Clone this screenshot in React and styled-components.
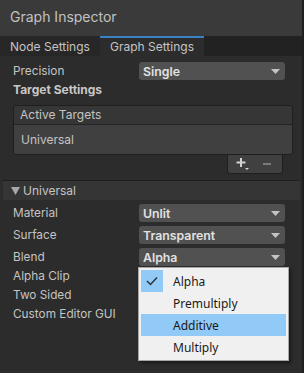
import React from "react";
import styled, { createGlobalStyle } from "styled-components";

const GlobalStyle = createGlobalStyle`
  html, body {
    margin: 0;
    padding: 0;
    background: #1f1f1f;
  }
  body {
    font-family: Inter, "Noto Sans", sans-serif;
    font-size: 12px;
    color: #c4c4c4;
  }
`;

const blendOptions = ["Alpha", "Premultiply", "Additive", "Multiply"];

const Arrow = () => (
  <svg width="9" height="5" viewBox="0 0 9 5">
    <path d="M0 0 H9 L4.5 5 Z" fill="#c4c4c4" />
  </svg>
);

const Dropdown = ({ value }) => (
  <Select>
    <span>{value}</span>
    <Arrow />
  </Select>
);

const App = () => {
  return (
    <Window>
      <GlobalStyle />
      <TitleBar>Graph Inspector</TitleBar>
      <TabStrip>
        <Tab>Node Settings</Tab>
        <Tab active>Graph Settings</Tab>
      </TabStrip>
      <Content>
        <FieldRow>
          <Label>Precision</Label>
          <Dropdown value="Single" />
        </FieldRow>
        <SectionTitle>Target Settings</SectionTitle>
        <ListBox>
          <ListHeader>Active Targets</ListHeader>
          <ListBody>Universal</ListBody>
        </ListBox>
        <ListFooter>
          <FooterButton>
            <svg width="14" height="14" viewBox="0 0 14 14">
              <path d="M5 1 V10 M0.5 5.5 H9.5" stroke="#d2d2d2" strokeWidth="2" />
              <path d="M9 11 H13 L11 13 Z" fill="#d2d2d2" />
            </svg>
          </FooterButton>
          <FooterButton>
            <svg width="10" height="4" viewBox="0 0 10 4">
              <path d="M1 2 H9" stroke="#7a7a7a" strokeWidth="2" />
            </svg>
          </FooterButton>
        </ListFooter>
      </Content>
      <Foldout>
        <svg width="9" height="8" viewBox="0 0 9 8">
          <path d="M0 0 H9 L4.5 8 Z" fill="#a8a8a8" />
        </svg>
        <span>Universal</span>
      </Foldout>
      <Fields>
        <FieldRow spaced>
          <Label>Material</Label>
          <Dropdown value="Unlit" />
        </FieldRow>
        <FieldRow spaced>
          <Label>Surface</Label>
          <Dropdown value="Transparent" />
        </FieldRow>
        <FieldRow>
          <Label>Blend</Label>
          <Dropdown value="Alpha" />
          <Menu>
            {blendOptions.map((opt) => (
              <MenuItem key={opt} hovered={opt === "Additive"}>
                <CheckCell checked={opt === "Alpha"}>
                  {opt === "Alpha" && (
                    <svg width="12" height="10" viewBox="0 0 12 10">
                      <path d="M1 5 L4.5 8.5 L11 1.5" stroke="#333" strokeWidth="1.5" fill="none" />
                    </svg>
                  )}
                </CheckCell>
                <span>{opt}</span>
              </MenuItem>
            ))}
          </Menu>
        </FieldRow>
        <FieldRow toggle>
          <Label>Alpha Clip</Label>
        </FieldRow>
        <FieldRow toggle>
          <Label>Two Sided</Label>
        </FieldRow>
        <FieldRow toggle>
          <Label>Custom Editor GUI</Label>
        </FieldRow>
      </Fields>
    </Window>
  );
};

export default App;

const Window = styled.div`
  width: 302px;
  height: 373px;
  background: #2c2c2c;
  display: flex;
  flex-direction: column;
  overflow: hidden;
`;

const TitleBar = styled.div`
  height: 36px;
  background: #3a3a3a;
  color: #c2c2c2;
  font-size: 14px;
  line-height: 34px;
  padding-left: 10px;
  flex-shrink: 0;
`;

const TabStrip = styled.div`
  height: 20px;
  background: #222222;
  display: flex;
  flex-shrink: 0;
`;

const Tab = styled.div`
  width: ${(p) => (p.active ? "104px" : "100px")};
  box-sizing: border-box;
  background: ${(p) => (p.active ? "#2c2c2c" : "#272727")};
  border-top: 2px solid ${(p) => (p.active ? "#3c7fc4" : "transparent")};
  padding-left: 10px;
  line-height: 17px;
  color: #c4c4c4;
  font-size: 12px;
`;

const Content = styled.div`
  padding: 6px 9px 0 13px;
  display: flex;
  flex-direction: column;
`;

const FieldRow = styled.div`
  position: relative;
  display: flex;
  align-items: center;
  height: ${(p) => (p.toggle ? "19px" : "18px")};
  margin-bottom: ${(p) => (p.spaced ? "4px" : "0")};
  padding-right: ${(p) => (p.toggle ? "0" : "8px")};
`;

const Label = styled.div`
  width: 126px;
  flex-shrink: 0;
  color: #c4c4c4;
  font-size: 11.8px;
`;

const Select = styled.div`
  flex: 1;
  height: 18px;
  box-sizing: border-box;
  background: #515151;
  border-radius: 3px;
  display: flex;
  align-items: center;
  justify-content: space-between;
  padding: 0 5px 0 4px;
  color: #e2e2e2;
  font-weight: 600;
  font-size: 12.3px;
`;

const SectionTitle = styled.div`
  height: 20px;
  line-height: 20px;
  font-weight: 700;
  font-size: 12px;
  color: #c8c8c8;
`;

const ListBox = styled.div`
  margin-top: 5px;
  border: 1px solid #1f1f1f;
  border-radius: 3px;
  overflow: hidden;
`;

const ListHeader = styled.div`
  height: 18px;
  line-height: 18px;
  background: #363636;
  border-bottom: 1px solid #232323;
  padding-left: 6px;
  color: #c4c4c4;
  font-size: 12px;
`;

const ListBody = styled.div`
  height: 29px;
  line-height: 29px;
  background: #404040;
  padding-left: 7px;
  color: #c4c4c4;
  font-size: 12px;
`;

const ListFooter = styled.div`
  align-self: flex-end;
  margin-right: 10px;
  width: 56px;
  height: 19px;
  box-sizing: border-box;
  background: #404040;
  border: 1px solid #1f1f1f;
  border-top: none;
  border-radius: 0 0 3px 3px;
  display: flex;
  align-items: center;
  justify-content: center;
  gap: 8px;
`;

const FooterButton = styled.div`
  width: 16px;
  height: 16px;
  display: flex;
  align-items: center;
  justify-content: center;
`;

const Foldout = styled.div`
  margin: 6px 2px 0 3px;
  height: 19px;
  background: #353535;
  border-top: 1px solid #1e1e1e;
  display: flex;
  align-items: center;
  gap: 3px;
  padding-left: 8px;
  color: #c4c4c4;
  font-size: 12px;
`;

const Fields = styled.div`
  padding: 4px 9px 0 13px;
  display: flex;
  flex-direction: column;
`;

const Menu = styled.div`
  position: absolute;
  top: 19px;
  left: 125px;
  width: 151px;
  box-sizing: border-box;
  background: #f0f0f0;
  border: 1px solid #a7a7a7;
  padding: 2px;
  box-shadow: 2px 2px 3px rgba(0, 0, 0, 0.45);
  z-index: 2;
  font-family: "Noto Sans", "Open Sans", sans-serif;
`;

const MenuItem = styled.div`
  height: 22px;
  display: flex;
  align-items: center;
  background: ${(p) => (p.hovered ? "#91c9f7" : "transparent")};
  color: #1a1a1a;
  font-size: 12px;
`;

const CheckCell = styled.div`
  width: 22px;
  height: 22px;
  margin-right: 10px;
  display: flex;
  align-items: center;
  justify-content: center;
  background: ${(p) => (p.checked ? "#91c9f7" : "transparent")};
`;
